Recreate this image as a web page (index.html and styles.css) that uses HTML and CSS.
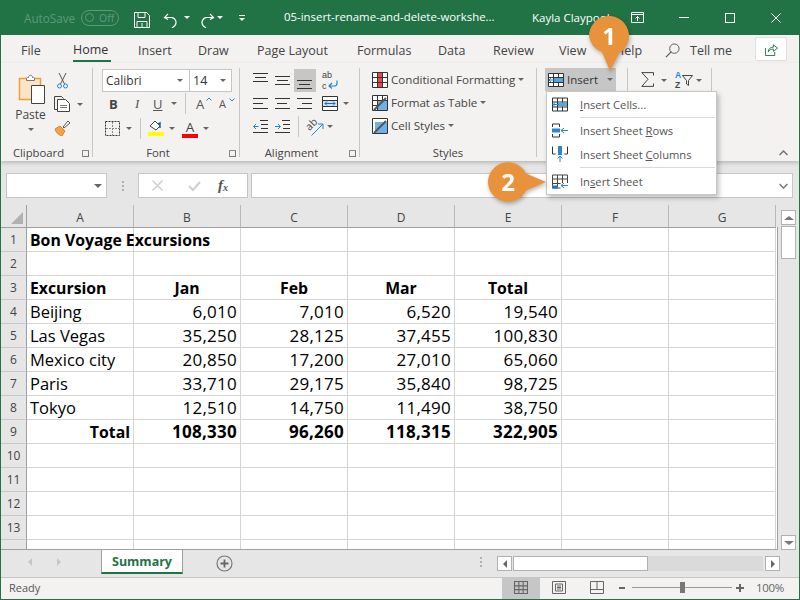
FILE: index.html
```html
<!DOCTYPE html>
<html lang="en">
<head>
<meta charset="utf-8">
<title>Excel</title>
<link rel="stylesheet" href="styles.css">
</head>
<body>
<div class="app">
  <header class="titlebar">
    <span class="autosave">AutoSave</span>
    <span class="toggle"><i></i><b>Off</b></span>
    <svg class="ti save" viewBox="0 0 16 16"><path d="M.5.500h12l3 3v12H.5zM4 .5v5h7v-5M3 15.500V9.500h10v6M8 11v4.500" fill="none" stroke="#fff"/></svg>
    <svg class="ti undo" viewBox="0 0 16 16"><path d="M5 2 1.500 5.500 5 7.500M2 5.500h6.500a5 5 0 0 1 3 8.500l-2.500 2" fill="none" stroke="#fff" stroke-width="1.200"/></svg>
    <span class="caret white c1"></span>
    <svg class="ti redo" viewBox="0 0 16 16"><path d="M11 2l3.500 3.500L11 7.500M14 5.500H7.500a5 5 0 0 0-3 8.500l2.500 2" fill="none" stroke="#fff" stroke-width="1.200"/></svg>
    <span class="caret white c2"></span>
    <span class="qat"><i></i><span class="caret white"></span></span>
    <span class="doc">05-insert-rename-and-delete-workshe...</span>
    <span class="user">Kayla Claypool</span>
    <svg class="ti rd" viewBox="0 0 13 11"><path d="M.5.500h12v10H.5zM.5 2.500h12M6.500 9V4.500M4.500 6.500l2-2 2 2" fill="none" stroke="#fff"/></svg>
    <span class="min"></span>
    <span class="max"></span>
    <svg class="ti close" viewBox="0 0 11 11"><path d="M.5.500l10 10M10.500.500l-10 10" fill="none" stroke="#fff" stroke-width="1.100"/></svg>
  </header>

  <nav class="tabs">
    <span class="tab t-file">File</span>
    <span class="tab t-home">Home</span>
    <span class="tab t-ins">Insert</span>
    <span class="tab t-draw">Draw</span>
    <span class="tab t-page">Page Layout</span>
    <span class="tab t-form">Formulas</span>
    <span class="tab t-data">Data</span>
    <span class="tab t-rev">Review</span>
    <span class="tab t-view">View</span>
    <span class="tab t-help">Help</span>
    <svg class="search" viewBox="0 0 16 16"><circle cx="10" cy="6" r="5" fill="none" stroke="#555"/><path d="M6.500 9.500 1 15" stroke="#555" stroke-width="1.300"/></svg>
    <span class="tab t-tell">Tell me</span>
    <span class="share"><svg viewBox="0 0 14 14"><path d="M.5 5.500v8h10v-4" fill="none" stroke="#217346"/><path d="M3.500 9.500c0-3 2-5 5.500-5V2l4.500 3.500L9 9V6.500c-2.500 0-4.500 1-5.500 3z" fill="none" stroke="#217346"/></svg></span>
  </nav>

  <section class="ribbon">
    <div class="group g-clip">
      <div class="gbody clipbody">
        <div class="paste">
          <svg class="pasteicon" viewBox="0 0 28 31"><path d="M1.500 5.500h21v21h-21z" fill="#fce4c4" stroke="#ed9d3f" stroke-width="1.500"/><path d="M8.500 5.500c0-1 1-1 2-1 0-3 4-3 4 0 1 0 2 0 2 1v2h-8z" fill="#fff" stroke="#777"/><path d="M13.500 12.500h13v18h-13z" fill="#fff" stroke="#444"/></svg>
          <span class="pastelabel">Paste</span>
          <span class="caret"></span>
        </div>
        <div class="clipcol">
          <svg class="scissors" viewBox="0 0 11 16"><path d="M2 0l5.500 11M9 0 3.500 11" stroke="#555" fill="none"/><circle cx="2.500" cy="13" r="2" fill="none" stroke="#1e87d6"/><circle cx="8.500" cy="13" r="2" fill="none" stroke="#1e87d6"/></svg>
          <div class="copyrow">
            <svg class="copy" viewBox="0 0 17 16"><path d="M3.500 13.500H.5V.5h7l2 2" fill="none" stroke="#444"/><path d="M3.500 3.500h8l4 4v8h-12z" fill="#fff" stroke="#444"/><path d="M6 9.500h7M6 11.500h7" stroke="#777"/></svg>
            <span class="caret"></span>
          </div>
          <svg class="brush" viewBox="0 0 17 16"><path d="M1 9l5-3 5 5-3 5c-3-1-6-3-7-7z" fill="#f2a24a" stroke="#e0862b"/><path d="M9 7l5-6 2 2-6 5z" fill="#fff" stroke="#555"/></svg>
        </div>
      </div>
      <div class="glabel pad"><span>Clipboard</span><i class="launch"></i></div>
    </div>

    <div class="group g-font">
      <div class="gbody fontbody">
        <div class="combos">
          <span class="combo fname">Calibri<span class="caret"></span></span>
          <span class="combo fsize">14<span class="caret"></span></span>
        </div>
        <div class="frow r2">
          <b class="fb">B</b><i class="fi">I</i><u class="fu">U</u><span class="caret"></span>
          <span class="vsep"></span>
          <span class="aa a1">A<svg viewBox="0 0 6 4"><path d="M.5 3.500 3 1l2.500 2.500" fill="none" stroke="#1e87d6"/></svg></span>
          <span class="aa a2">A<svg viewBox="0 0 6 4"><path d="M.5.500 3 3 5.500.500" fill="none" stroke="#1e87d6"/></svg></span>
        </div>
        <div class="frow r3">
          <svg class="borders" viewBox="0 0 15 15"><path d="M.5.500h14v14H.5z" fill="none" stroke="#333" stroke-dasharray="2 1"/><path d="M7.500 1v13M1 7.500h13" stroke="#888" stroke-dasharray="2 1"/></svg>
          <span class="caret cb"></span>
          <span class="vsep s2"></span>
          <span class="fill"><svg viewBox="0 0 16 11"><path d="M2 6l5-5 5 5-4 4z" fill="#fff" stroke="#444"/><path d="M12 8V3l-2 1" fill="none" stroke="#1e5fa8" stroke-width="1.500"/></svg><i class="yellow"></i></span>
          <span class="caret cf"></span>
          <span class="fcolor">A<i class="red"></i></span>
          <span class="caret"></span>
        </div>
      </div>
      <div class="glabel pad"><span>Font</span><i class="launch"></i></div>
    </div>

    <div class="group g-align">
      <div class="gbody alignbody">
        <div class="arow">
          <span class="ai top"></span><span class="ai mid"></span><span class="ai bot on"></span>
          <span class="wrap"><span>ab</span><span>c</span><svg viewBox="0 0 10 9"><path d="M9 .5v3c0 1.500-1 2.500-2.500 2.500H1M4 3 1 6l3 2.500" fill="none" stroke="#1e87d6" stroke-width="1.200"/></svg></span>
        </div>
        <div class="arow">
          <span class="ai left"></span><span class="ai center"></span><span class="ai right"></span>
          <svg class="merge" viewBox="0 0 16 15"><path d="M.5.500h15v14H.5z" fill="#fff" stroke="#333"/><path d="M1 4.500h14M1 10.500h14" stroke="#333"/><path d="M1 5h14v5H1z" fill="#cfe4f7"/><path d="M3 7.500h10M5 5.500l-2 2 2 2M11 5.500l2 2-2 2" fill="none" stroke="#1a6fb8"/></svg>
          <span class="caret"></span>
        </div>
        <div class="arow">
          <svg class="indent" viewBox="0 0 15 13"><path d="M7 .5h8M8 4.500h7M8 8.500h7M0 12.500h15" fill="none" stroke="#333"/><path d="M.5 6.500h5M3 4 .5 6.500 3 9" fill="none" stroke="#1e87d6"/></svg>
          <svg class="indent in2" viewBox="0 0 15 13"><path d="M7 .5h8M8 4.500h7M8 8.500h7M0 12.500h15" fill="none" stroke="#333"/><path d="M0 6.500h5M3 4l2.500 2.500L3 9" fill="none" stroke="#1e87d6"/></svg>
          <span class="vsep s3"></span>
          <span class="orient"><span>ab</span><svg viewBox="0 0 13 13"><path d="M.5 12.500 12 1M7 1h5v5" fill="none" stroke="#1e87d6"/></svg></span>
          <span class="caret"></span>
        </div>
      </div>
      <div class="glabel pad"><span>Alignment</span><i class="launch"></i></div>
    </div>

    <div class="group g-styles">
      <div class="gbody stylebody">
        <div class="sitem"><svg viewBox="0 0 16 16"><path d="M.5.500h15v15H.5zM.5 5.500h15M.5 10.500h15M5.500.5v15M10.500.5v15" fill="#fff" stroke="#333"/><path d="M6 1h4v4H6zM6 6h4v4H6zM6 11h4v4H6z" fill="#e8474c"/></svg><span>Conditional Formatting</span><span class="caret"></span></div>
        <div class="sitem"><svg viewBox="0 0 16 16"><path d="M.5.500h15v15H.5zM.5 5.500h15M.5 10.500h15M5.500.5v15M10.500.5v15" fill="#fff" stroke="#333"/><path d="M6 6h9v9H6z" fill="#6fb1e6"/><path d="M2 15 14 3" stroke="#555" stroke-width="2"/></svg><span>Format as Table</span><span class="caret"></span></div>
        <div class="sitem"><svg viewBox="0 0 16 16"><path d="M.5.500h15v15H.5z" fill="#fff" stroke="#333"/><path d="M3 4h12v11H3z" fill="#6fb1e6"/><path d="M2 15 14 3" stroke="#555" stroke-width="2"/></svg><span>Cell Styles</span><span class="caret"></span></div>
      </div>
      <div class="glabel"><span>Styles</span></div>
    </div>

    <div class="group g-cells">
      <div class="gbody cellbody">
        <div class="insertbtn">
          <svg viewBox="0 0 16 14"><path d="M.5.500h15v13H.5zM.5 4.500h15M.5 9.500h15M5.500.5v13M10.500.5v13" fill="#fff" stroke="#333"/><path d="M6 5h9v4H6z" fill="#5aa5e0"/><path d="M1 7h6M3.500 4.500 1 7l2.500 2.500" fill="none" stroke="#1e87d6"/></svg>
          <span>Insert</span><span class="caret"></span>
        </div>
      </div>
    </div>

    <div class="group g-edit">
      <div class="gbody editbody">
        <svg class="sigma" viewBox="0 0 13 15"><path d="M12.500 3.500V.6H.8L7 7.300.8 14.400h11.700v-2.900" fill="none" stroke="#444"/></svg><span class="caret"></span>
        <span class="sort"><span class="az"><em>A</em><em>Z</em></span><svg viewBox="0 0 11 11"><path d="M.5.500h10L6.500 5.500v5l-2-1.500V5.500z" fill="none" stroke="#444"/></svg></span><span class="caret sortcaret"></span>
      </div>
    </div>
    <svg class="collapse" viewBox="0 0 9 6"><path d="M.5 5 4.500 1l4 4" fill="none" stroke="#777" stroke-width="1.500"/></svg>
  </section>

  <section class="formulabar">
    <span class="namebox"><span class="caret big"></span></span>
    <span class="grip"><i></i><i></i><i></i></span>
    <span class="fxbtns">
      <svg class="x" viewBox="0 0 11 11"><path d="M.5.500l10 10M10.500.500l-10 10" stroke="#cfcfcf" stroke-width="1.500"/></svg>
      <svg class="ok" viewBox="0 0 13 10"><path d="M1 5l4 4 7-8" fill="none" stroke="#cfcfcf" stroke-width="2"/></svg>
      <span class="fx">f<sub>x</sub></span>
    </span>
    <span class="finput"><svg viewBox="0 0 9 6"><path d="M.5 1l4 4 4-4" fill="none" stroke="#777" stroke-width="1.500"/></svg></span>
  </section>

  <section class="sheetarea">
    <div class="gridwrap">
      <table class="sheet">
        <thead>
          <tr><th class="corner"><i></i></th><th>A</th><th>B</th><th>C</th><th>D</th><th>E</th><th>F</th><th>G</th></tr>
        </thead>
        <tbody>
          <tr><th>1</th><td class="bold">Bon Voyage Excursions</td><td></td><td></td><td></td><td></td><td></td><td></td></tr>
          <tr><th>2</th><td></td><td></td><td></td><td></td><td></td><td></td><td></td></tr>
          <tr><th>3</th><td class="bold">Excursion</td><td class="bold mid">Jan</td><td class="bold mid">Feb</td><td class="bold mid">Mar</td><td class="bold mid">Total</td><td></td><td></td></tr>
          <tr><th>4</th><td>Beijing</td><td class="num">6,010</td><td class="num">7,010</td><td class="num">6,520</td><td class="num">19,540</td><td></td><td></td></tr>
          <tr><th>5</th><td>Las Vegas</td><td class="num">35,250</td><td class="num">28,125</td><td class="num">37,455</td><td class="num">100,830</td><td></td><td></td></tr>
          <tr><th>6</th><td>Mexico city</td><td class="num">20,850</td><td class="num">17,200</td><td class="num">27,010</td><td class="num">65,060</td><td></td><td></td></tr>
          <tr><th>7</th><td>Paris</td><td class="num">33,710</td><td class="num">29,175</td><td class="num">35,840</td><td class="num">98,725</td><td></td><td></td></tr>
          <tr><th>8</th><td>Tokyo</td><td class="num">12,510</td><td class="num">14,750</td><td class="num">11,490</td><td class="num">38,750</td><td></td><td></td></tr>
          <tr><th>9</th><td class="bold lab">Total</td><td class="bold num">108,330</td><td class="bold num">96,260</td><td class="bold num">118,315</td><td class="bold num">322,905</td><td></td><td></td></tr>
          <tr><th>10</th><td></td><td></td><td></td><td></td><td></td><td></td><td></td></tr>
          <tr><th>11</th><td></td><td></td><td></td><td></td><td></td><td></td><td></td></tr>
          <tr><th>12</th><td></td><td></td><td></td><td></td><td></td><td></td><td></td></tr>
          <tr><th>13</th><td></td><td></td><td></td><td></td><td></td><td></td><td></td></tr>
          <tr><th></th><td></td><td></td><td></td><td></td><td></td><td></td><td></td></tr>
        </tbody>
      </table>
    </div>
    <div class="vscroll">
      <span class="sbtn"><span class="tri up"></span></span>
      <span class="thumb"></span>
      <span class="track"></span>
      <span class="sbtn"><span class="tri down"></span></span>
    </div>
  </section>

  <section class="sheettabs">
    <span class="nav"><i class="tri left dim"></i><i class="tri right dim"></i></span>
    <span class="stab">Summary</span>
    <svg class="addsheet" viewBox="0 0 17 17"><circle cx="8.500" cy="8.500" r="7.500" fill="none" stroke="#777" stroke-width="1.200"/><path d="M8.500 4.500v8M4.500 8.500h8" stroke="#666" stroke-width="1.800"/></svg>
    <span class="grip g2"><i></i><i></i><i></i></span>
    <div class="hscroll">
      <span class="hbtn"><i class="tri left"></i></span>
      <span class="hthumb"></span>
      <span class="htrack"></span>
      <span class="hbtn"><i class="tri right"></i></span>
    </div>
  </section>

  <footer class="status">
    <span class="ready">Ready</span>
    <span class="view on"><svg viewBox="0 0 13 12"><path d="M.5.500h12v11H.5zM.5 4.500h12M.5 8h12M4.500.5v11M8.500.5v11" fill="none" stroke="#666"/></svg></span>
    <span class="view"><svg viewBox="0 0 14 13"><path d="M.5.500h13v12H.5zM3.500 3h7v7h-7zM5 5h4M5 6.500h4M5 8h4" fill="none" stroke="#666"/></svg></span>
    <span class="view"><svg viewBox="0 0 14 13"><path d="M.5.500h13v12H.5zM.5 8.500h13M7 .5v8" fill="none" stroke="#666"/></svg></span>
    <span class="zoomminus"></span>
    <span class="slider"><i></i></span>
    <span class="zoomplus"></span>
    <span class="pct">100%</span>
  </footer>
</div>

<div class="menu">
  <div class="mitem"><svg viewBox="0 0 16 14"><path d="M.5.500h15v13H.5zM.5 4.500h15M.5 9.500h15M5.500.5v13M10.500.5v13" fill="#fff" stroke="#333"/><path d="M6 5h9v4H6z" fill="#5aa5e0"/><path d="M1 7h6M3.500 4.500 1 7l2.500 2.500" fill="none" stroke="#1e87d6"/></svg><span><u>I</u>nsert Cells...</span></div>
  <div class="msep"></div>
  <div class="mitem"><svg viewBox="0 0 16 14"><path d="M.5 3.500V.5h7v3M.5 10.500v3h7v-3" fill="none" stroke="#333"/><path d="M0 5h8v4H0z" fill="#2a84d2"/><path d="M9 7h7M12 4.500 9 7l3 2.500" fill="none" stroke="#1e87d6"/></svg><span>Insert Sheet <u>R</u>ows</span></div>
  <div class="mitem m3"><svg viewBox="0 0 16 16"><path d="M3.500 8H.5V.5M12.500 8h3V.5" fill="none" stroke="#333"/><path d="M6 0h4v9H6z" fill="#2a84d2"/><path d="M8 10v6M5.500 12.500 8 10l2.500 2.500" fill="none" stroke="#1e87d6"/></svg><span>Insert Sheet <u>C</u>olumns</span></div>
  <div class="msep"></div>
  <div class="mitem m4"><svg viewBox="0 0 16 14"><path d="M.5.500h15v8M.5.500v13h8M.5 4.500h15M.5 9h8M5.500.5v13M10.500.5v8" fill="#fff" stroke="#444"/><path d="M0 11h6v3H0z" fill="#2a6fb8"/><path d="M9 11h7M12 8.500 9 11l3 2.500" fill="none" stroke="#1e87d6"/></svg><span>In<u>s</u>ert Sheet</span></div>
</div>

<div class="callout c-one">
  <svg viewBox="0 0 44 56"><path d="M2 20a20 20 0 1 1 30 17.300L23 55l-8-19A20 20 0 0 1 2 20z" fill="#e9923c"/></svg>
  <span>1</span>
</div>
<div class="callout c-two">
  <svg viewBox="0 0 64 44"><path d="M3 22a20 20 0 0 1 38-8.500l20 8.500-20 8.500A20 20 0 0 1 3 22z" fill="#e9923c"/></svg>
  <span>2</span>
</div>
</body>
</html>
```
FILE: styles.css
```css
* { box-sizing: border-box; }
html, body { margin: 0; padding: 0; height: 600px; overflow: hidden; background: #e6e6e6; }
body { position: relative; font-family: "Open Sans", "Noto Sans", sans-serif; color: #444; }
.app { width: 800px; height: 600px; display: flex; flex-direction: column; border-left: 1px solid #217346; border-right: 1px solid #217346; border-bottom: 1px solid #217346; overflow: hidden; }

.caret { display: inline-block; width: 0; height: 0; border-left: 3px solid transparent; border-right: 3px solid transparent; border-top: 3px solid #666; flex: none; }
.caret.white { border-top-color: #fff; }

/* title bar */
.titlebar { height: 35px; flex: none; background: #217346; display: flex; align-items: center; color: #fff; font-size: 12px; margin-left: -1px; margin-right: -1px; }
.autosave { margin-left: 24px; color: #5e9a7a; font-size: 11.700px; width: 50px; }
.toggle { margin-left: 7px; width: 38px; height: 16px; border: 1px solid #5e9a7a; border-radius: 8px; display: flex; align-items: center; padding-left: 3px; color: #5e9a7a; font-size: 10.500px; }
.toggle i { width: 9px; height: 9px; border: 1px solid #5e9a7a; border-radius: 50%; }
.toggle b { font-weight: 400; margin-left: 5px; }
.ti { display: block; flex: none; }
.save { width: 16px; height: 16px; margin-left: 15px; margin-top: 4px; }
.undo { width: 16px; height: 16px; margin-left: 13px; margin-top: 4px; }
.c1 { margin-left: 5px; }
.redo { width: 16px; height: 16px; margin-left: 9px; margin-top: 4px; }
.c2 { margin-left: 2px; }
.qat { margin-left: 15px; width: 7px; display: flex; flex-direction: column; align-items: center; gap: 2px; }
.qat i { width: 6px; height: 1px; background: #fff; }
.doc { margin-left: 39px; margin-bottom: 3px; width: 212px; font-size: 11.400px; white-space: nowrap; }
.user { margin-left: 36px; width: 99px; font-size: 11.500px; white-space: nowrap; }
.rd { width: 13px; height: 11px; margin-left: 0; }
.min { margin-left: 35px; width: 10px; height: 1px; background: #fff; }
.max { margin-left: 36px; width: 10px; height: 10px; border: 1px solid #fff; }
.close { width: 10px; height: 10px; margin-left: 36px; }

/* tabs */
.tabs { height: 28px; flex: none; background: #f3f2f1; display: flex; align-items: center; font-size: 12.500px; color: #444; padding-top: 2px; }
.tab { white-space: nowrap; }
.t-file { margin-left: 20px; width: 52px; }
.t-home { width: 65px; height: 28px; line-height: 26px; color: #333; position: relative; font-weight: 500; margin-top: -2px; padding-top: 2px; }
.t-home::after { content: ""; position: absolute; left: 0; bottom: 1px; width: 38px; height: 2px; background: #217346; }
.t-ins { width: 60px; }
.t-draw { width: 59px; }
.t-page { width: 100px; }
.t-form { width: 81px; }
.t-data { width: 55px; }
.t-rev { width: 66px; }
.t-view { width: 56px; }
.t-help { width: 50px; }
.search { width: 15px; height: 15px; flex: none; }
.t-tell { margin-left: 10px; width: 65px; }
.share { width: 32px; height: 24px; background: #fff; border: 1px solid #e1dfdd; border-radius: 2px; display: flex; align-items: center; justify-content: center; margin-top: -2px; }
.share svg { width: 13px; height: 13px; }

/* ribbon */
.ribbon { height: 98px; flex: none; background: #f3f2f1; display: flex; position: relative; box-shadow: 0 2px 4px rgba(0,0,0,.2); z-index: 1; }
.group { display: flex; flex-direction: column; border-right: 1px solid #c6c6c6; margin-bottom: 4px; margin-top: 5px; position: relative; flex: none; }
.gbody { flex: 1; min-height: 0; }
.glabel { height: 19px; flex: none; font-size: 11.300px; display: flex; align-items: center; justify-content: center; color: #444; position: relative; padding-top: 9px; }
.glabel.pad { padding-right: 16px; }
.launch { position: absolute; right: 3px; bottom: 0; width: 7px; height: 7px; border-left: 1px solid #888; border-top: 1px solid #888; box-shadow: inset -2px -2px 0 -1px #777; }

.g-clip { width: 92px; }
.clipbody { display: flex; padding: 5px 0 0 13px; }
.paste { width: 40px; display: flex; flex-direction: column; align-items: center; }
.pasteicon { width: 28px; height: 31px; display: block; margin-left: -5px; }
.pastelabel { font-size: 12px; margin-top: 3px; margin-left: -7px; line-height: 16px; }
.paste .caret { margin-top: 5px; margin-left: -7px; }
.clipcol { display: flex; flex-direction: column; margin-left: 0; }
.scissors { width: 11px; height: 16px; margin-left: 3px; display: block; }
.copyrow { display: flex; align-items: center; gap: 6px; margin-top: 7px; }
.copy { width: 17px; height: 16px; display: block; }
.brush { width: 17px; height: 16px; margin-top: 8px; display: block; }

.g-font { width: 147px; }
.fontbody { padding: 1px 0 0 9px; }
.combos { display: flex; }
.combo { background: #fff; border: 1px solid #c6c6c6; height: 23px; display: flex; align-items: center; justify-content: space-between; font-size: 12px; padding: 0 6px 0 3px; color: #333; }
.fname { width: 88px; }
.fsize { width: 43px; margin-left: -1px; padding-left: 3px; padding-right: 5px; font-size: 12.500px; }
.frow { display: flex; align-items: center; }
.r2 { height: 23px; padding-left: 7px; }
.fb { font-size: 13px; width: 23px; font-weight: 700; color: #444; }
.fi { font-size: 13px; width: 21px; font-family: "Liberation Serif", serif; color: #555; padding-left: 3px; }
.fu { font-size: 13px; width: 18px; color: #555; }
.vsep { width: 1px; height: 21px; background: #c6c6c6; margin-left: 8px; }
.aa { font-size: 13px; position: relative; color: #555; display: block; width: 20px; }
.a1 { margin-left: 10px; }
.a2 { margin-left: 3px; font-size: 11px; }
.aa svg { position: absolute; left: 10px; top: 2px; width: 6px; height: 4px; }
.r3 { height: 26px; padding-left: 3px; }
.borders { width: 15px; height: 15px; }
.cb { margin-left: 6px; }
.s2 { margin-left: 8px; }
.fill { width: 16px; margin-left: 7px; display: flex; flex-direction: column; }
.fill svg { width: 16px; height: 11px; display: block; }
.yellow { height: 4px; background: #ffff00; display: block; margin-top: 1px; }
.red { height: 4px; width: 16px; background: #ff0000; display: block; margin-top: -1px; }
.cf { margin-left: 5px; }
.fcolor { margin-left: 7px; margin-right: 5px; width: 16px; font-size: 13.500px; line-height: 16px; text-align: center; color: #444; display: block; }

.g-align { width: 120px; }
.alignbody { padding: 1px 0 0 9px; display: flex; flex-direction: column; }
.arow { display: flex; align-items: center; height: 24px; }
.ai { width: 22px; height: 23px; display: block; position: relative; flex: none; background-repeat: no-repeat; background-image: linear-gradient(#333,#333), linear-gradient(#333,#333), linear-gradient(#333,#333); }
.ai.top { background-size: 15px 1px, 11px 1px, 15px 1px; background-position: 3px 4px, 5px 8px, 3px 12px; margin-left: 1px; }
.ai.mid { background-size: 15px 1px, 11px 1px, 15px 1px; background-position: 3px 7px, 5px 11px, 3px 15px; }
.ai.bot { background-size: 15px 1px, 11px 1px, 15px 1px; background-position: 3px 11px, 5px 15px, 3px 19px; }
.ai.on { background-color: #c6c6c6; }
.ai.left { background-size: 15px 1px, 10px 1px, 15px 1px; background-position: 3px 6px, 3px 11px, 3px 16px; margin-left: 1px; }
.ai.center { background-size: 15px 1px, 10px 1px, 15px 1px; background-position: 3px 6px, 5px 11px, 3px 16px; }
.ai.right { background-size: 15px 1px, 10px 1px, 15px 1px; background-position: 3px 6px, 8px 11px, 3px 16px; }
.wrap { width: 16px; height: 21px; margin-left: 6px; font-family: "Liberation Sans", sans-serif; font-size: 9px; position: relative; display: flex; flex-direction: column; color: #444; }
.wrap span { height: 10.500px; line-height: 10.500px; display: block; }
.wrap svg { position: absolute; left: 6px; top: 10px; width: 10px; height: 9px; }
.merge { width: 16px; height: 15px; margin-left: 6px; }
.arow .merge + .caret { margin-left: 5px; }
.indent { width: 15px; height: 13px; margin-left: 4px; }
.in2 { margin-left: 7px; }
.s3 { margin-left: 8px; height: 21px; }
.orient { margin-left: 7px; width: 17px; position: relative; display: block; height: 18px; font-size: 10.500px; }
.orient span { position: absolute; left: -1px; top: -1px; transform: rotate(-45deg); }
.orient svg { position: absolute; left: 5px; top: 5px; width: 13px; height: 13px; }
.orient + .caret { margin-left: 4px; }

.g-styles { width: 177px; }
.stylebody { padding: 0 0 0 12px; }
.sitem { height: 23px; display: flex; align-items: center; font-size: 11.600px; white-space: nowrap; color: #444; }
.sitem svg { width: 16px; height: 16px; flex: none; margin-right: 3px; }
.sitem .caret { margin-left: 3px; }

.g-cells { width: 91px; }
.cellbody { padding: 0 0 0 8px; }
.insertbtn { width: 71px; height: 23px; background: #c6c6c6; display: flex; align-items: center; padding-left: 3px; font-size: 11.500px; color: #333; }
.insertbtn svg { width: 16px; height: 14px; margin-right: 3px; flex: none; }
.insertbtn .caret { margin-left: 9px; }

.g-edit { width: 84px; }
.editbody { display: flex; align-items: flex-start; padding: 4px 0 0 13px; }
.sigma { width: 13px; height: 15px; display: block; flex: none; }
.editbody .caret { margin-top: 7px; margin-left: 7px; }
.editbody .caret.sortcaret { margin-left: 3px; }
.sort { display: flex; margin-left: 8px; }
.az { display: flex; flex-direction: column; font-family: "Liberation Sans", sans-serif; font-size: 8.500px; font-weight: 700; margin-top: -2px; margin-right: 1px; }
.az em { font-style: normal; height: 10px; line-height: 10px; display: block; }
.az em:first-child { color: #1e87d6; }
.sort svg { width: 11px; height: 11px; margin-top: 3px; }
.collapse { position: absolute; right: 11px; bottom: 5px; width: 9px; height: 6px; }

/* formula bar */
.formulabar { height: 44px; flex: none; background: #e6e6e6; display: flex; align-items: center; padding: 8px 5px 3px 5px; }
.namebox { width: 101px; height: 25px; background: #fff; border: 1px solid #c6c6c6; display: flex; align-items: center; justify-content: flex-end; padding-right: 4px; flex: none; }
.caret.big { border-left-width: 4px; border-right-width: 4px; border-top-width: 4px; }
.grip { display: flex; flex-direction: column; gap: 2px; margin-left: 15px; }
.grip i { width: 2px; height: 2px; background: #b1b1b1; display: block; }
.fxbtns { margin-left: 14px; width: 110px; height: 25px; background: #fff; border: 1px solid #c6c6c6; display: flex; align-items: center; padding-left: 13px; flex: none; }
.x { width: 11px; height: 11px; }
.ok { width: 13px; height: 10px; margin-left: 25px; }
.fx { margin-left: 17px; font-family: "Liberation Serif", serif; font-style: italic; font-size: 15px; color: #555; font-weight: 700; line-height: 1; }
.fx sub { font-size: 10px; vertical-align: -1px; }
.finput { flex: 1; margin-left: 3px; margin-right: 1px; height: 25px; background: #fff; border: 1px solid #c6c6c6; display: flex; align-items: center; justify-content: flex-end; padding-right: 4px; }
.finput svg { width: 9px; height: 6px; }

/* sheet */
.sheetarea { height: 345px; flex: none; display: flex; background: #e6e6e6; }
.gridwrap { width: 777px; height: 345px; overflow: hidden; flex: none; border-bottom: 1px solid #9f9f9f; background: linear-gradient(#9f9f9f,#9f9f9f) right bottom / 1px 322px no-repeat, linear-gradient(#fff,#fff) left bottom / 100% 322px no-repeat; }
.sheet { border-collapse: separate; border-spacing: 0; table-layout: fixed; width: 775px; background: #fff; }
.sheet th { background: #e6e6e6; font-weight: 400; font-size: 12px; color: #444; padding: 0; border-right: 1px solid #b1b1b1; border-bottom: 1px solid #c6c6c6; width: 26px; height: 24px; }
.sheet thead th { height: 23px; width: 107px; border-bottom: 1px solid #9f9f9f; border-right: 1px solid #b9b9b9; vertical-align: bottom; padding-bottom: 1px; }
.sheet thead th.corner { width: 26px; position: relative; border-right: 1px solid #9f9f9f; }
.corner i { position: absolute; right: 3px; bottom: 3px; width: 0; height: 0; border-left: 12px solid transparent; border-bottom: 12px solid #b1b1b1; }
.sheet tbody th { border-right: 1px solid #9f9f9f; }
.sheet td { height: 24px; padding: 0 3px; border-right: 1px solid #d4d4d4; border-bottom: 1px solid #d4d4d4; font-family: "Open Sans", sans-serif; font-size: 16.500px; color: #000; white-space: nowrap; overflow: visible; line-height: 20px; }
.sheet td.bold { font-weight: 700; font-size: 15.800px; }
.sheet td.mid { text-align: center; }
.sheet td.lab { text-align: right; }
.sheet td.num { text-align: right; font-size: 17px; letter-spacing: .25px; }

.vscroll { flex: 1; display: flex; flex-direction: column; padding: 5px 0 0 3px; width: 20px; }
.sbtn { width: 15px; height: 15px; background: #fff; border: 1px solid #b1b1b1; display: flex; align-items: center; justify-content: center; flex: none; }
.thumb { width: 15px; height: 33px; background: #fff; border: 1px solid #b1b1b1; margin-top: 1px; flex: none; }
.track { flex: 1; }
.tri { width: 0; height: 0; display: block; }
.tri.up { border-left: 5px solid transparent; border-right: 5px solid transparent; border-bottom: 4px solid #777; }
.tri.down { border-left: 5px solid transparent; border-right: 5px solid transparent; border-top: 4px solid #777; }
.tri.left { border-top: 4px solid transparent; border-bottom: 4px solid transparent; border-right: 4px solid #666; }
.tri.right { border-top: 4px solid transparent; border-bottom: 4px solid transparent; border-left: 4px solid #666; }
.tri.dim.left { border-right-color: #c6c6c6; }
.tri.dim.right { border-left-color: #c6c6c6; }

/* sheet tabs */
.sheettabs { height: 28px; flex: none; background: #e6e6e6; display: flex; align-items: flex-start; border-bottom: 1px solid #c6c6c6; }
.nav { width: 100px; display: flex; padding: 8px 0 0 27px; gap: 25px; flex: none; }
.stab { width: 82px; height: 24px; background: #fff; border-left: 1px solid #9f9f9f; border-right: 1px solid #9f9f9f; border-bottom: 2px solid #217346; color: #217346; font-weight: 700; font-size: 12.500px; text-align: center; line-height: 24px; flex: none; }
.addsheet { width: 17px; height: 17px; margin: 5px 0 0 33px; flex: none; }
.grip.g2 { margin: 7px 0 0 247px; }
.hscroll { margin: 6px 0 0 15px; width: 283px; height: 15px; display: flex; flex: none; }
.hbtn { width: 15px; height: 15px; background: #fff; border: 1px solid #b1b1b1; display: flex; align-items: center; justify-content: center; flex: none; }
.hthumb { width: 135px; background: #fff; border: 1px solid #b1b1b1; margin-left: 1px; flex: none; }
.htrack { flex: 1; background: #dadada; margin-right: 2px; }

/* status */
.status { height: 21px; flex: none; background: #f3f2f1; display: flex; align-items: center; font-size: 11px; color: #555; }
.ready { margin-left: 8px; width: 493px; padding-bottom: 2px; }
.view { width: 38px; height: 21px; display: flex; align-items: center; justify-content: center; padding-bottom: 2px; }
.view.on { background: #c6c6c6; }
.view svg { width: 14px; height: 13px; display: block; }
.zoomminus { width: 6px; height: 2px; background: #666; margin-left: 3px; margin-bottom: 2px; }
.slider { width: 100px; height: 1px; background: #999; margin-left: 7px; position: relative; display: block; margin-bottom: 2px; }
.slider i { position: absolute; left: 48px; top: -5px; width: 5px; height: 11px; background: #777; }
.zoomplus { width: 8px; height: 8px; margin-left: 4px; margin-bottom: 2px; background: linear-gradient(#666,#666) center/8px 2px no-repeat, linear-gradient(#666,#666) center/2px 8px no-repeat; }
.pct { margin-left: 12px; font-size: 11.500px; letter-spacing: -.3px; color: #666; padding-bottom: 2px; }

/* overlays */
.menu { position: absolute; left: 546px; top: 91px; width: 171px; height: 104px; background: #fff; border: 1px solid #c6c6c6; box-shadow: 2px 3px 5px rgba(0,0,0,.25); z-index: 3; }
.mitem { height: 24px; display: flex; align-items: center; padding-left: 5px; font-size: 11.200px; color: #555; white-space: nowrap; }
.mitem svg { width: 16px; height: 15px; flex: none; margin-right: 12px; }
.mitem.m3 svg { height: 16px; }
.mitem.m4 { margin-top: 1px; }
.msep { height: 1px; background: #d9d9d9; margin: 1px 1px 0 33px; }
.callout { position: absolute; z-index: 4; color: #fff; font-family: "Open Sans", sans-serif; font-weight: 700; font-size: 24px; filter: drop-shadow(1px 2px 2px rgba(0,0,0,.3)); }
.callout svg { display: block; width: 100%; height: 100%; }
.callout span { position: absolute; text-align: center; line-height: 40px; top: 0; width: 40px; }
.c-one { left: 587px; top: 16px; width: 44px; height: 56px; }
.c-one span { left: 2px; top: 0; }
.c-two { left: 485px; top: 160px; width: 64px; height: 44px; }
.c-two span { left: 3px; top: 2px; }
```
